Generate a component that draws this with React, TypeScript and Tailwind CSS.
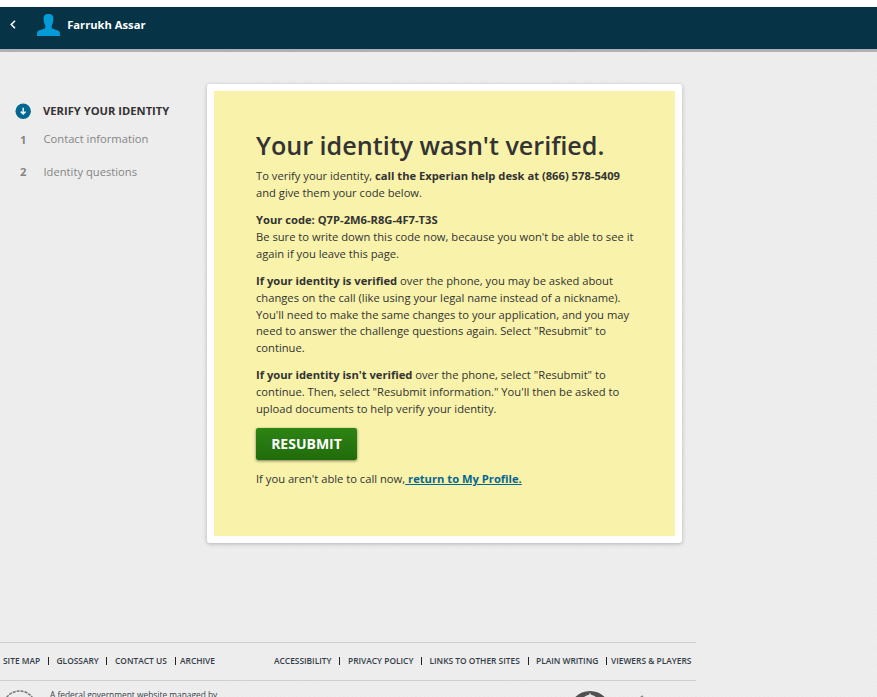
import React from "react";

function Line({ children, className = "" }: { children: React.ReactNode; className?: string }) {
  return <span className={`block whitespace-nowrap ${className}`}>{children}</span>;
}

function Header() {
  return (
    <header className="mt-[7px] h-[45px] border-b-[3px] border-[#b0b1b2] bg-[#063446] flex items-start">
      <svg className="ml-[10px] mt-[13px] shrink-0" width="6" height="9" viewBox="0 0 6 9" fill="none" stroke="#fff" strokeWidth="1.6">
        <path d="M5 0.8 L1.3 4.5 L5 8.2" />
      </svg>
      <svg className="ml-[21px] mt-[7px] shrink-0" width="23" height="22" viewBox="0 0 23 22" fill="#049cd8">
        <path d="M11.5 0 C7.8 0 6.5 1.8 6.6 4.8 C6.6 8.1 7.6 10.2 8.3 11.4 V14.2 C6 15.4 3 16 1 16.9 C0.2 17.5 0 19.2 0 22 H23 C23 19.2 22.8 17.5 22 16.9 C20 16 17 15.4 14.7 14.2 V11.4 C15.4 10.2 16.4 8.1 16.4 4.8 C16.5 1.8 15.2 0 11.5 0 Z" />
      </svg>
      <span className="ml-[7.2px] mt-[10px] text-[11.2px] leading-4 font-bold text-white">Farrukh Assar</span>
    </header>
  );
}

function Steps() {
  return (
    <nav className="w-[207px] shrink-0 pt-[51px] text-[11.2px] leading-4 whitespace-nowrap">
      <div className="flex h-4 items-center">
        <svg className="ml-[15px] shrink-0" width="16" height="16" viewBox="0 0 16 16">
          <circle cx="8.2" cy="8.3" r="7.7" fill="#046791" />
          <path d="M8.2 4.8 V11 M5.8 8.6 L8.2 11 L10.6 8.6" fill="none" stroke="#e8f3f7" strokeWidth="1.5" />
        </svg>
        <span className="ml-3 font-bold text-[#333333]">VERIFY YOUR IDENTITY</span>
      </div>
      <div className="mt-3 flex text-[#858585]">
        <span className="w-[43.5px] pl-5 pt-px font-bold">1</span>
        <span>Contact information</span>
      </div>
      <div className="mt-4 flex text-[#858585]">
        <span className="w-[43.5px] pl-5 font-bold">2</span>
        <span>Identity questions</span>
      </div>
    </nav>
  );
}

function Notice() {
  return (
    <section className="mt-8 h-[459px] w-[475px] rounded-[3px] bg-white p-[7px] shadow-[0_1px_4px_rgba(0,0,0,0.25)]">
      <div className="h-[445px] bg-[#f8f2aa] pl-[42px] pt-[35px] text-[11.2px] leading-[16.8px] text-[#333]">
        <h1 className="text-[25.15px] leading-[38px] font-semibold whitespace-nowrap">Your identity wasn't verified.</h1>
        <p className="mt-[4.4px]">
          <Line>To verify your identity, <b>call the Experian help desk at (866) 578-5409</b></Line>
          <Line>and give them your code below.</Line>
        </p>
        <p className="mt-[10.2px]">
          <Line><b>Your code: Q7P-2M6-R8G-4F7-T3S</b></Line>
          <Line>Be sure to write down this code now, because you won't be able to see it</Line>
          <Line>again if you leave this page.</Line>
        </p>
        <p className="mt-[10.4px]">
          <Line><b>If your identity is verified</b> over the phone, you may be asked about</Line>
          <Line>changes on the call (like using your legal name instead of a nickname).</Line>
          <Line>You'll need to make the same changes to your application, and you may</Line>
          <Line>need to answer the challenge questions again. Select "Resubmit" to</Line>
          <Line>continue.</Line>
        </p>
        <p className="mt-[10px]">
          <Line><b>If your identity isn't verified</b> over the phone, select "Resubmit" to</Line>
          <Line>continue. Then, select "Resubmit information." You'll then be asked to</Line>
          <Line>upload documents to help verify your identity.</Line>
        </p>
        <button className="mt-[10.6px] block h-8 w-[101px] rounded-[2px] bg-linear-to-b from-[#2e8414] to-[#206b0b] text-[14px] leading-8 font-bold text-white shadow-[0_1px_3px_rgba(0,0,0,0.5)]">
          RESUBMIT
        </button>
        <p className="mt-[11px] whitespace-nowrap">
          If you aren't able to call now,
          <a className="font-bold text-[#046791] underline"> return to My Profile.</a>
        </p>
      </div>
    </section>
  );
}

const leftLinks = [
  { label: "SITE MAP", cls: "w-[44.5px]" },
  { label: "GLOSSARY", cls: "w-[49.5px] ml-[8px]" },
  { label: "CONTACT US", cls: "w-[60px] ml-[8px]" },
  { label: "ARCHIVE", cls: "ml-[4px]" },
];

const rightLinks = [
  { label: "ACCESSIBILITY", cls: "w-[65px]" },
  { label: "PRIVACY POLICY", cls: "w-[73px] ml-[8px]" },
  { label: "LINKS TO OTHER SITES", cls: "w-[98.5px] ml-[7.5px]" },
  { label: "PLAIN WRITING", cls: "w-[70px] ml-[7px]" },
  { label: "VIEWERS & PLAYERS", cls: "ml-[4px]" },
];

function Links({ items, className }: { items: { label: string; cls: string }[]; className: string }) {
  return (
    <div className={`flex h-[35px] items-center whitespace-nowrap ${className}`}>
      {items.map((item, i) => (
        <React.Fragment key={item.label}>
          {i > 0 && <span className="h-2 w-px shrink-0 bg-[#222]" />}
          <a className={`shrink-0 ${item.cls}`}>{item.label}</a>
        </React.Fragment>
      ))}
    </div>
  );
}

function Footer() {
  return (
    <footer className="mt-[99px] w-[696px] text-[#333d47]">
      <div className="flex h-[39px] border-y border-[#cfcfcf] text-[8.4px] leading-[35px] font-semibold">
        <Links items={leftLinks} className="w-[274px] pl-[3px]" />
        <Links items={rightLinks} className="" />
      </div>
      <div className="flex h-4 overflow-hidden">
        <svg className="shrink-0" width="50" height="16" viewBox="0 0 50 16" fill="none">
          <circle cx="19.5" cy="26" r="16" stroke="#777" strokeWidth="1.5" strokeDasharray="3 1" />
        </svg>
        <span className="w-[519px] pt-[6px] text-[8.4px] leading-4 whitespace-nowrap">A federal government website managed by</span>
        <svg className="shrink-0" width="90" height="16" viewBox="0 0 90 16">
          <circle cx="21" cy="31" r="21" fill="#505050" />
          <path d="M15 16 L17.5 14.6 L20 13.8 L21 11.5 L22 13.8 L24.5 14.6 L27 16 Z" fill="#e5e5e5" />
          <path d="M71 16 L73.5 14.3 L74.5 16 Z" fill="#888" />
        </svg>
      </div>
    </footer>
  );
}

export default function App() {
  return (
    <div className="flow-root h-[697px] w-[877px] overflow-hidden bg-white font-['Open_Sans','Noto_Sans',sans-serif]">
      <Header />
      <main className="h-[645px] overflow-hidden bg-[#ededed] bg-[repeating-linear-gradient(45deg,#ebebeb_0px,#ebebeb_1px,#eeeeee_1px,#eeeeee_3px)]">
        <div className="flex items-start">
          <Steps />
          <Notice />
        </div>
        <Footer />
      </main>
    </div>
  );
}
